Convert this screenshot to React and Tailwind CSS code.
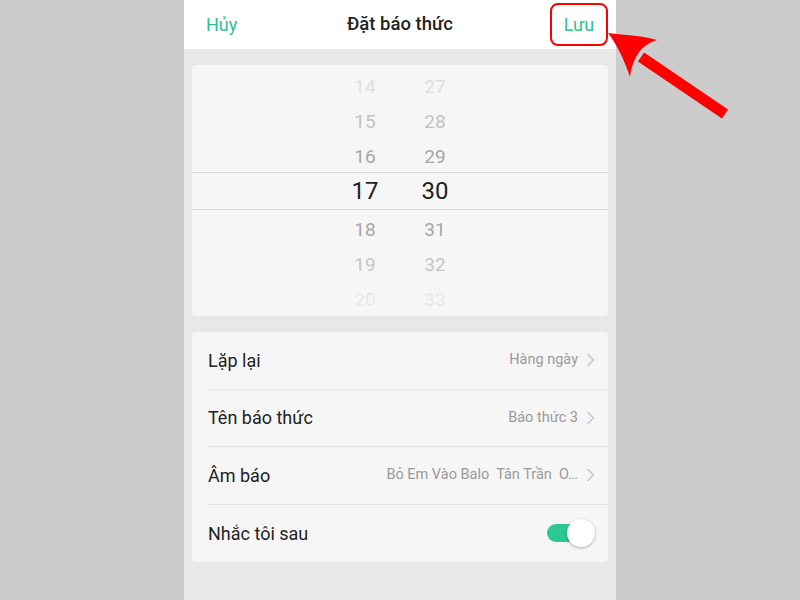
import React from 'react';

const hours = [
  { v: '14', c: 'text-[#dedede]' },
  { v: '15', c: 'text-[#c2c2c2]' },
  { v: '16', c: 'text-[#a6a6a6]' },
];
const hoursBelow = [
  { v: '18', c: 'text-[#a6a6a6]' },
  { v: '19', c: 'text-[#c6c6c6]' },
  { v: '20', c: 'text-[#e8e8e8]' },
];
const minutes = ['27', '28', '29'];
const minutesBelow = ['31', '32', '33'];

const Chevron = () => (
  <svg width="9" height="14" viewBox="0 0 9 14" className="ml-2 shrink-0">
    <polyline points="1.5,1 7.5,7 1.5,13" fill="none" stroke="#c4c4c4" strokeWidth="1.3" />
  </svg>
);

const PickerRow = ({ h, m, c }) => (
  <div className={`flex h-[35px] items-center justify-center pt-[6px] text-[19px] ${c}`}>
    <span className="w-[70px] text-center">{h}</span>
    <span className="w-[70px] text-center">{m}</span>
  </div>
);

const SettingRow = ({ label, children, last }) => (
  <div className="flex h-[58px] items-stretch pl-4">
    <div className={`flex flex-1 items-center pr-[13px] ${last ? '' : 'border-b border-[#e3e3e3]'}`}>
      <span className="text-[18px] text-[#222]">{label}</span>
      <div className="ml-auto flex items-center">{children}</div>
    </div>
  </div>
);

const App = () => {
  return (
    <div
      className="relative flex h-[600px] w-[800px] justify-center bg-[#cccccc]"
      style={{ fontFamily: 'Roboto, "Noto Sans", sans-serif' }}
    >
      <div className="flex h-full w-[432px] flex-col bg-[#e8e8e8]">
        {/* Header */}
        <div className="grid h-[49px] grid-cols-[1fr_auto_1fr] items-center bg-white px-2">
          <span className="ml-[14px] justify-self-start text-[18px] text-[#2bc28f]">Hủy</span>
          <span className="text-[18.5px] font-medium text-[#222]">Đặt báo thức</span>
          <span className="flex h-[43px] w-[58px] items-center justify-center justify-self-end rounded-lg border-2 border-[#ff0000] text-[18px] text-[#2bc28f]">
            Lưu
          </span>
        </div>

        <div className="flex flex-col gap-4 px-2 pt-4">
          {/* Time picker */}
          <div className="flex h-[251px] flex-col rounded bg-[#f6f6f6] pt-[2px]">
            {hours.map((r, i) => (
              <PickerRow key={r.v} h={r.v} m={minutes[i]} c={r.c} />
            ))}
            <div className="flex h-[38px] items-center justify-center border-y border-[#d6d6d6] text-[24px] text-[#1e1e1e]">
              <span className="w-[70px] text-center">17</span>
              <span className="w-[70px] text-center">30</span>
            </div>
            {hoursBelow.map((r, i) => (
              <PickerRow key={r.v} h={r.v} m={minutesBelow[i]} c={r.c} />
            ))}
          </div>

          {/* Settings */}
          <div className="flex h-[230px] flex-col rounded bg-[#f6f6f6]">
            <SettingRow label="Lặp lại">
              <span className="text-[14.5px] text-[#9a9a9a]">Hàng ngày</span>
              <Chevron />
            </SettingRow>
            <SettingRow label="Tên báo thức">
              <span className="text-[14.5px] text-[#9a9a9a]">Báo thức 3</span>
              <Chevron />
            </SettingRow>
            <SettingRow label="Âm báo">
              <span className="whitespace-pre text-[14.5px] text-[#9a9a9a]">Bỏ Em Vào Balo  Tân Trần  O…</span>
              <Chevron />
            </SettingRow>
            <SettingRow label="Nhắc tôi sau" last>
              <div className="relative flex h-[28px] w-[48px] items-center">
                <div className="h-[18px] w-[44px] rounded-full bg-[#2dc793]" />
                <div className="absolute right-0 top-0 h-[28px] w-[28px] rounded-full bg-white shadow-[0_1px_3px_rgba(0,0,0,0.3)]" />
              </div>
            </SettingRow>
          </div>
        </div>
      </div>

      {/* Annotation arrow */}
      <svg className="pointer-events-none absolute left-0 top-0" width="800" height="600" viewBox="0 0 800 600">
        <line x1="641" y1="57" x2="725" y2="114" stroke="#ff0000" strokeWidth="11" />
        <path
          d="M608 33 C625 35 645 36 657 40 C648 43 641 48 638 54 C634 60 631 68 630 77 C625 62 618 46 608 33 Z"
          fill="#ff0000"
        />
      </svg>
    </div>
  );
};

export default App;
